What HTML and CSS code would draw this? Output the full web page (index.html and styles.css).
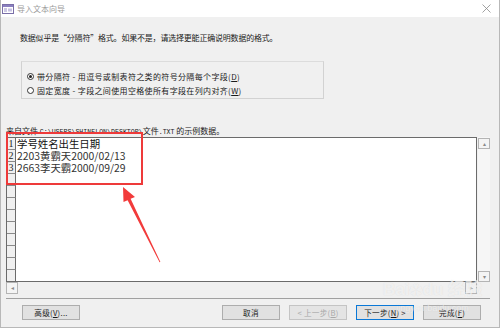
FILE: index.html
```html
<!DOCTYPE html>
<html lang="zh-CN">
<head>
    <meta charset="UTF-8">
    <title>导入文本向导</title>
    <link rel="stylesheet" href="styles.css">
</head>
<body>
    <div class="window">
        <div class="titlebar">
            <svg class="app-icon" width="12" height="10" viewBox="0 0 12 10">
                <rect x="0.5" y="0.5" width="11" height="9" fill="#fff" stroke="#7a6fa8"/>
                <rect x="1" y="1" width="10" height="2" fill="#8b7fc0"/>
                <rect x="2" y="4.5" width="3" height="1" fill="#9a90c8"/>
                <rect x="2" y="6.5" width="3" height="1" fill="#9a90c8"/>
                <rect x="6" y="4.5" width="4" height="3" fill="#c8c2e4"/>
            </svg>
            <span class="title">导入文本向导</span>
            <svg class="close" width="9" height="9" viewBox="0 0 9 9">
                <path d="M0.5 0.5 L8.5 8.5 M8.5 0.5 L0.5 8.5" stroke="#8a8a8a" stroke-width="0.8"/>
            </svg>
        </div>
        <div class="content">
            <p class="intro">数据似乎是“分隔符”格式。如果不是，请选择更能正确说明数据的格式。</p>
            <div class="group">
                <div class="opt"><span class="radio on"></span>带分隔符 - 用逗号或制表符之类的符号分隔每个字段(<u>D</u>)</div>
                <div class="opt"><span class="radio"></span>固定宽度 - 字段之间使用空格使所有字段在列内对齐(<u>W</u>)</div>
            </div>
            <p class="source">来自文件 <span class="path">C:\USERS\SHINELON\DESKTOP\</span>文件<span class="path">.TXT</span> 的示例数据。</p>
            <div class="preview">
                <div class="preview-main">
                    <div class="grid">
                        <div class="row"><span class="num">1</span><span class="cell first">学号姓名出生日期</span></div>
                        <div class="row"><span class="num">2</span><span class="cell">2203黄霸天2000/02/13</span></div>
                        <div class="row"><span class="num">3</span><span class="cell">2663李天霸2000/09/29</span></div>
                        <div class="row"><span class="num"></span></div>
                        <div class="row"><span class="num"></span></div>
                        <div class="row"><span class="num"></span></div>
                        <div class="row"><span class="num"></span></div>
                        <div class="row"><span class="num"></span></div>
                        <div class="row"><span class="num"></span></div>
                        <div class="row"><span class="num"></span></div>
                        <div class="row"><span class="num"></span></div>
                        <div class="row"><span class="num"></span></div>
                    </div>
                    <div class="hscroll">
                        <span class="sbtn">&#9666;</span>
                        <span class="track"></span>
                        <span class="sbtn">&#9656;</span>
                    </div>
                </div>
                <div class="side">
                    <div class="vscroll">
                        <span class="sbtn">&#9652;</span>
                        <span class="track"></span>
                        <span class="sbtn">&#9662;</span>
                    </div>
                </div>
            </div>
            <div class="separator"></div>
            <div class="buttons">
                <button class="btn">高级(<u>V</u>)...</button>
                <div class="btn-group">
                    <button class="btn">取消</button>
                    <button class="btn disabled">&lt; 上一步(<u>B</u>)</button>
                    <button class="btn focus">下一步(<u>N</u>) &gt;</button>
                    <button class="btn">完成(<u>F</u>)</button>
                </div>
            </div>
        </div>

        <div class="mark"></div>
        <svg class="arrow" width="500" height="328" viewBox="0 0 500 328">
            <polygon points="123,187 135,197 130.6,198.8 160.4,262 159.6,262.2 127.6,200.2 123.5,202" fill="#f23b3b"/>
        </svg>
        <div class="watermark">
            <span class="wm-logo">Bai<span class="paw">&#10047;</span>du 经验</span>
            <span class="wm-url">jingyan.baidu.com</span>
        </div>
    </div>
</body>
</html>
```

FILE: styles.css
```css
* {
    margin: 0;
    padding: 0;
    box-sizing: border-box;
}

body {
    width: 500px;
    height: 328px;
    overflow: hidden;
    background-color: #f0f0f0;
    font-family: "Noto Sans CJK SC", "Liberation Sans", sans-serif;
    color: #1a1a1a;
}

.window {
    position: relative;
    width: 500px;
    height: 328px;
    border-left: 1px solid #b8b8b8;
    border-right: 1px solid #b8b8b8;
    border-bottom: 1px solid #b8b8b8;
    background-color: #f0f0f0;
}

.titlebar {
    height: 17px;
    background-color: #fff;
    display: flex;
    align-items: center;
}

.app-icon {
    margin-left: 1px;
}

.title {
    margin-left: 3px;
    font-size: 8px;
    line-height: 10px;
    color: #9a9a9a;
}

.close {
    margin-left: auto;
    margin-right: 8px;
}

.content {
    padding: 0 9px 0 5px;
}

.intro {
    margin: 16px 0 0 14px;
    font-size: 8px;
    line-height: 10px;
    letter-spacing: -0.2px;
}

.group {
    margin: 18px 0 0 15px;
    width: 303px;
    height: 38px;
    border: 1px solid #d2d2d2;
    border-top-color: #dcdcdc;
    padding: 7px 0 0 5px;
}

.opt {
    display: flex;
    align-items: center;
    height: 14px;
    font-size: 8px;
    letter-spacing: 0.35px;
    white-space: nowrap;
}

.radio {
    width: 7px;
    height: 7px;
    border: 1px solid #333;
    border-radius: 50%;
    margin-right: 3px;
    background-color: #fff;
    display: flex;
    align-items: center;
    justify-content: center;
}

.radio.on::after {
    content: "";
    width: 3px;
    height: 3px;
    border-radius: 50%;
    background-color: #222;
}

.source {
    margin-top: 27px;
    font-size: 8px;
    line-height: 9px;
    white-space: nowrap;
}

.path {
    font-family: "Liberation Mono", monospace;
    font-size: 6.6px;
}

.preview {
    display: flex;
}

.preview-main {
    width: 471px;
}

.grid {
    height: 145px;
    border: 1px solid #6b6b6b;
    background-color: #fff;
    overflow: hidden;
}

.row {
    display: flex;
    height: 12px;
}

.num {
    width: 9px;
    flex: none;
    background-color: #f0f0f0;
    border-right: 1px solid #6b6b6b;
    border-bottom: 1px solid #8a8a8a;
    font-family: "Liberation Serif", serif;
    font-size: 10px;
    line-height: 11px;
    text-align: center;
    color: #222;
}

.cell {
    padding-left: 1px;
    font-size: 10.4px;
    line-height: 12px;
    color: #333;
    white-space: nowrap;
}

.cell.first {
    color: #111;
}

.hscroll {
    height: 12px;
    display: flex;
    background-color: #f0f0f0;
}

.sbtn {
    width: 12px;
    height: 12px;
    flex: none;
    border: 1px solid #b4b4b4;
    background-color: #f4f4f4;
    color: #8a8a8a;
    font-size: 6px;
    line-height: 10px;
    text-align: center;
}

.track {
    flex: 1;
}

.side {
    width: 12px;
    margin-left: 1px;
}

.vscroll {
    height: 145px;
    display: flex;
    flex-direction: column;
    background-color: #f6f6f6;
    padding-top: 1px;
}

.vscroll .sbtn {
    height: 11px;
    line-height: 9px;
}

.separator {
    margin-top: 4px;
    height: 1px;
    background-color: #a0a0a0;
}

.buttons {
    margin-top: 6px;
    display: flex;
    justify-content: space-between;
    padding-left: 16px;
}

.btn-group {
    display: flex;
    gap: 9px;
    margin-right: 9px;
}

.btn {
    width: 58px;
    height: 15px;
    border: 1px solid #adadad;
    background-color: #e1e1e1;
    font-family: "Noto Sans CJK SC", "Liberation Sans", sans-serif;
    font-size: 7.6px;
    line-height: 12px;
    letter-spacing: 0.3px;
    color: #1a1a1a;
}

.btn.disabled {
    color: #a8a8a8;
    border-color: #c4c4c4;
    background-color: #e4e4e4;
}

.btn.focus {
    border-color: #0a78d7;
}

.mark {
    position: absolute;
    left: 5px;
    top: 132px;
    width: 137px;
    height: 53px;
    border: 2px solid #ee3a3a;
}

.arrow {
    position: absolute;
    left: -1px;
    top: 0;
}

.watermark {
    position: absolute;
    left: 382px;
    top: 280px;
    display: flex;
    flex-direction: column;
    align-items: center;
    color: rgba(255, 255, 255, 0.6);
    text-shadow: 0 0 1px rgba(160, 160, 160, 0.3);
    font-family: "Liberation Sans", "Noto Sans CJK SC", sans-serif;
}

.wm-logo {
    font-size: 17px;
    font-weight: bold;
    line-height: 20px;
}

.paw {
    font-size: 13px;
}

.wm-url {
    font-size: 9px;
    line-height: 10px;
    margin-top: 2px;
}
```
